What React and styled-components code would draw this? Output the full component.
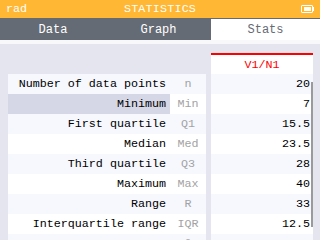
import styled, { createGlobalStyle } from "styled-components"

const GlobalStyle = createGlobalStyle`
body {
  margin: 0;
  background: #e4e5ef;
}
`

const rows = [
  { label: "Number of data points", abbr: "n", value: "20" },
  { label: "Minimum", abbr: "Min", value: "7", selected: true },
  { label: "First quartile", abbr: "Q1", value: "15.5" },
  { label: "Median", abbr: "Med", value: "23.5" },
  { label: "Third quartile", abbr: "Q3", value: "28" },
  { label: "Maximum", abbr: "Max", value: "40" },
  { label: "Range", abbr: "R", value: "33" },
  { label: "Interquartile range", abbr: "IQR", value: "12.5" },
  { label: "Mean", abbr: "x̄", value: "23.4" },
]

const App = () => {
  return (
    <Screen>
      <GlobalStyle />
      <Header>
        <HeaderSide>rad</HeaderSide>
        <Title>STATISTICS</Title>
        <HeaderSide $right>
          <Battery>
            <BatteryFill />
          </Battery>
          <BatteryTip />
        </HeaderSide>
      </Header>
      <Tabs>
        <Tab>Data</Tab>
        <Tab>Graph</Tab>
        <Tab $active>Stats</Tab>
      </Tabs>
      <Shadow />
      <Content>
        <LabelTable>
          {rows.map((r, i) => (
            <Row key={r.label} $odd={i % 2 === 0}>
              <LabelCell $selected={r.selected}>{r.label}</LabelCell>
              <AbbrCell>{r.abbr}</AbbrCell>
            </Row>
          ))}
        </LabelTable>
        <ValueColumn>
          <ColumnHead>V1/N1</ColumnHead>
          {rows.map((r, i) => (
            <ValueCell key={r.label} $odd={i % 2 === 0}>{r.value}</ValueCell>
          ))}
          <ScrollBar />
        </ValueColumn>
      </Content>
    </Screen>
  )
}

const Screen = styled.div`
width: 320px;
height: 240px;
overflow: hidden;
display: flex;
flex-direction: column;
background: #e4e5ef;
font-family: "Liberation Mono", "DejaVu Sans Mono", monospace;
font-size: 11.7px;
`

const Header = styled.div`
height: 18px;
flex-shrink: 0;
background: #ffb734;
color: #fff;
display: flex;
align-items: center;
justify-content: space-between;
padding: 0 6px;
`

const HeaderSide = styled.div`
width: 40px;
display: flex;
align-items: center;
justify-content: ${p => (p.$right ? "flex-end" : "flex-start")};
`

const Title = styled.div`
letter-spacing: 0.2px;
`

const Battery = styled.div`
width: 12px;
height: 8px;
border: 1px solid #fff;
border-radius: 1px;
padding: 1px;
box-sizing: border-box;
display: flex;
`

const BatteryFill = styled.div`
flex: 1;
background: #fff;
margin-left: 1px;
`

const BatteryTip = styled.div`
width: 1px;
height: 4px;
background: #fff;
`

const Tabs = styled.div`
height: 22px;
flex-shrink: 0;
background: #656b75;
display: grid;
grid-template-columns: 106px 105px 1fr;
padding-top: 1px;
box-sizing: border-box;
`

const Tab = styled.div`
display: flex;
align-items: center;
justify-content: center;
color: ${p => (p.$active ? "#656b75" : "#fff")};
background: ${p => (p.$active ? "#fff" : "transparent")};
font-size: 12px;
`

const Shadow = styled.div`
height: 4px;
flex-shrink: 0;
background: #f8f8fa;
`

const Content = styled.div`
flex: 1;
display: flex;
align-items: flex-start;
padding-left: 8px;
gap: 5px;
`

const LabelTable = styled.div`
width: 198px;
margin-top: 30px;
display: flex;
flex-direction: column;
`

const Row = styled.div`
height: 20px;
display: flex;
background: ${p => (p.$odd ? "#f6f8fe" : "#fff")};
`

const LabelCell = styled.div`
width: 162px;
padding-right: 4px;
box-sizing: border-box;
display: flex;
align-items: center;
justify-content: flex-end;
color: #000;
background: ${p => (p.$selected ? "#d6d7e6" : "transparent")};
white-space: nowrap;
`

const AbbrCell = styled.div`
flex: 1;
display: flex;
align-items: center;
justify-content: center;
color: #a3a3a3;
`

const ValueColumn = styled.div`
position: relative;
width: 102px;
margin-top: 9px;
display: flex;
flex-direction: column;
`

const ColumnHead = styled.div`
height: 21px;
box-sizing: border-box;
border-top: 2px solid #f00;
background: #fff;
color: #f00;
display: flex;
align-items: center;
justify-content: center;
`

const ValueCell = styled.div`
height: 20px;
padding-right: 3px;
display: flex;
align-items: center;
justify-content: flex-end;
background: ${p => (p.$odd ? "#f6f8fe" : "#fff")};
color: #000;
`

const ScrollBar = styled.div`
position: absolute;
right: 0;
top: 29px;
width: 2px;
height: 145px;
background: #9a9a9a;
`

export default App
